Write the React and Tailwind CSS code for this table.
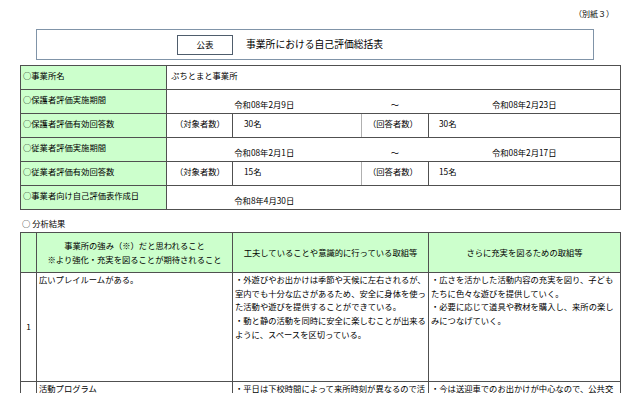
import React from 'react';

const FONT = { fontFamily: '"Noto Sans CJK JP", "Noto Sans", sans-serif' };

const B = 'border-[#505050]';

const App = () => {
  return (
    <div className="w-[640px] bg-white text-black text-[8.3px] leading-[13.7px]" style={FONT}>
      {/* 別紙 */}
      <div className="h-[29px] flex justify-end items-center pr-[26px] pb-[2px]">
        <span className="text-[8px]">（別紙３）</span>
      </div>

      {/* Title box */}
      <div className="ml-[36px] mr-[46px] h-[31px] border border-[#8094a8] flex items-center">
        <div className="ml-[140px] w-[56px] h-[20px] border border-[#4f5d6c] flex items-center justify-center text-[8.5px]">
          公表
        </div>
        <div className="ml-[13px] text-[9.8px]">事業所における自己評価総括表</div>
      </div>

      {/* Summary table */}
      <div className="mx-[20px] mt-[5px]">
        <table className="w-[600px] border-collapse table-fixed">
          <colgroup>
            <col className="w-[146px]" />
            <col className="w-[66px]" />
            <col className="w-[129px]" />
            <col className="w-[67px]" />
            <col className="w-[192px]" />
          </colgroup>
          <tbody>
            <tr className="h-[24px]">
              <td className={`border ${B} bg-[#ccffcc] pl-[2px] pb-[4px] align-middle`}>○事業所名</td>
              <td colSpan="4" className={`border ${B} pl-[4px] pb-[4px]`}>ぷちとまと事業所</td>
            </tr>
            <tr className="h-[24px]">
              <td className={`border ${B} bg-[#ccffcc] pl-[2px] pb-[4px]`}>○保護者評価実施期間</td>
              <td colSpan="2" className={`border-y ${B} text-center align-bottom pb-[1px]`}>令和08年2月9日</td>
              <td className={`border-y ${B} text-center align-bottom pb-[1px]`}>～</td>
              <td className={`border-y border-r ${B} text-center align-bottom pb-[1px]`}>令和08年2月23日</td>
            </tr>
            <tr className="h-[24px]">
              <td className={`border ${B} bg-[#ccffcc] pl-[2px] pb-[3px]`}>○保護者評価有効回答数</td>
              <td className={`border ${B} pl-[8px] pb-[3px]`}>（対象者数）</td>
              <td className={`border-y ${B} border-r border-r-[#b0b0b0] pl-[11px] pb-[3px]`}>30名</td>
              <td className={`border-y ${B} pl-[6px] pb-[3px]`}>（回答者数）</td>
              <td className={`border ${B} pl-[10px] pb-[3px]`}>30名</td>
            </tr>
            <tr className="h-[24px]">
              <td className={`border ${B} bg-[#ccffcc] pl-[2px] pb-[4px]`}>○従業者評価実施期間</td>
              <td colSpan="2" className={`border-y ${B} text-center align-bottom pb-[1px]`}>令和08年2月1日</td>
              <td className={`border-y ${B} text-center align-bottom pb-[1px]`}>～</td>
              <td className={`border-y border-r ${B} text-center align-bottom pb-[1px]`}>令和08年2月17日</td>
            </tr>
            <tr className="h-[24px]">
              <td className={`border ${B} bg-[#ccffcc] pl-[2px] pb-[3px]`}>○従業者評価有効回答数</td>
              <td className={`border ${B} pl-[8px] pb-[3px]`}>（対象者数）</td>
              <td className={`border-y ${B} border-r border-r-[#b0b0b0] pl-[11px] pb-[3px]`}>15名</td>
              <td className={`border-y ${B} pl-[6px] pb-[3px]`}>（回答者数）</td>
              <td className={`border ${B} pl-[10px] pb-[3px]`}>15名</td>
            </tr>
            <tr className="h-[24px]">
              <td className={`border ${B} bg-[#ccffcc] pl-[2px] pb-[4px]`}>○事業者向け自己評価表作成日</td>
              <td colSpan="2" className={`border-y ${B} text-center align-bottom pb-[1px]`}>令和8年4月30日</td>
              <td className={`border-y ${B}`}></td>
              <td className={`border-y border-r ${B}`}></td>
            </tr>
          </tbody>
        </table>
      </div>

      {/* Analysis */}
      <div className="mt-[7px] ml-[22px] h-[14px] flex items-center">○ 分析結果</div>

      <div className="mx-[20px] mt-[1px]">
        <table className="w-[600px] border-collapse table-fixed">
          <colgroup>
            <col className="w-[16px]" />
            <col className="w-[196px]" />
            <col className="w-[196px]" />
            <col className="w-[192px]" />
          </colgroup>
          <tbody>
            <tr className="h-[40px] bg-[#ccffcc]">
              <td className={`border ${B}`}></td>
              <td className={`border ${B} text-center align-middle`}>
                <div>事業所の強み（※）だと思われること</div>
                <div>※より強化・充実を図ることが期待されること</div>
              </td>
              <td className={`border ${B} text-center align-middle`}>工夫していることや意識的に行っている取組等</td>
              <td className={`border ${B} text-center align-middle`}>さらに充実を図るための取組等</td>
            </tr>
            <tr className="h-[109px]">
              <td className={`border ${B} text-center align-middle`}>1</td>
              <td className={`border ${B} align-top pl-[2px]`}>広いプレイルームがある。</td>
              <td className={`border ${B} align-top pl-[2px] whitespace-nowrap overflow-hidden`}>
                <div>・外遊びやお出かけは季節や天候に左右されるが、</div>
                <div>室内でも十分な広さがあるため、安全に身体を使っ</div>
                <div>た活動や遊びを提供することができている。</div>
                <div>・動と静の活動を同時に安全に楽しむことが出来る</div>
                <div>ように、スペースを区切っている。</div>
              </td>
              <td className={`border ${B} align-top pl-[2px] whitespace-nowrap overflow-hidden`}>
                <div>・広さを活かした活動内容の充実を図り、子ども</div>
                <div>たちに色々な遊びを提供していく。</div>
                <div>・必要に応じて道具や教材を購入し、来所の楽し</div>
                <div>みにつなげていく。</div>
              </td>
            </tr>
            <tr className="h-[60px]">
              <td className={`border ${B} text-center align-middle`}>2</td>
              <td className={`border ${B} align-top pl-[2px]`}>活動プログラム</td>
              <td className={`border ${B} align-top pl-[2px] whitespace-nowrap overflow-hidden`}>
                <div>・平日は下校時間によって来所時刻が異なるので活</div>
              </td>
              <td className={`border ${B} align-top pl-[2px] whitespace-nowrap overflow-hidden`}>
                <div>・今は送迎車でのお出かけが中心なので、公共交</div>
              </td>
            </tr>
          </tbody>
        </table>
      </div>
    </div>
  );
};

export default App;
